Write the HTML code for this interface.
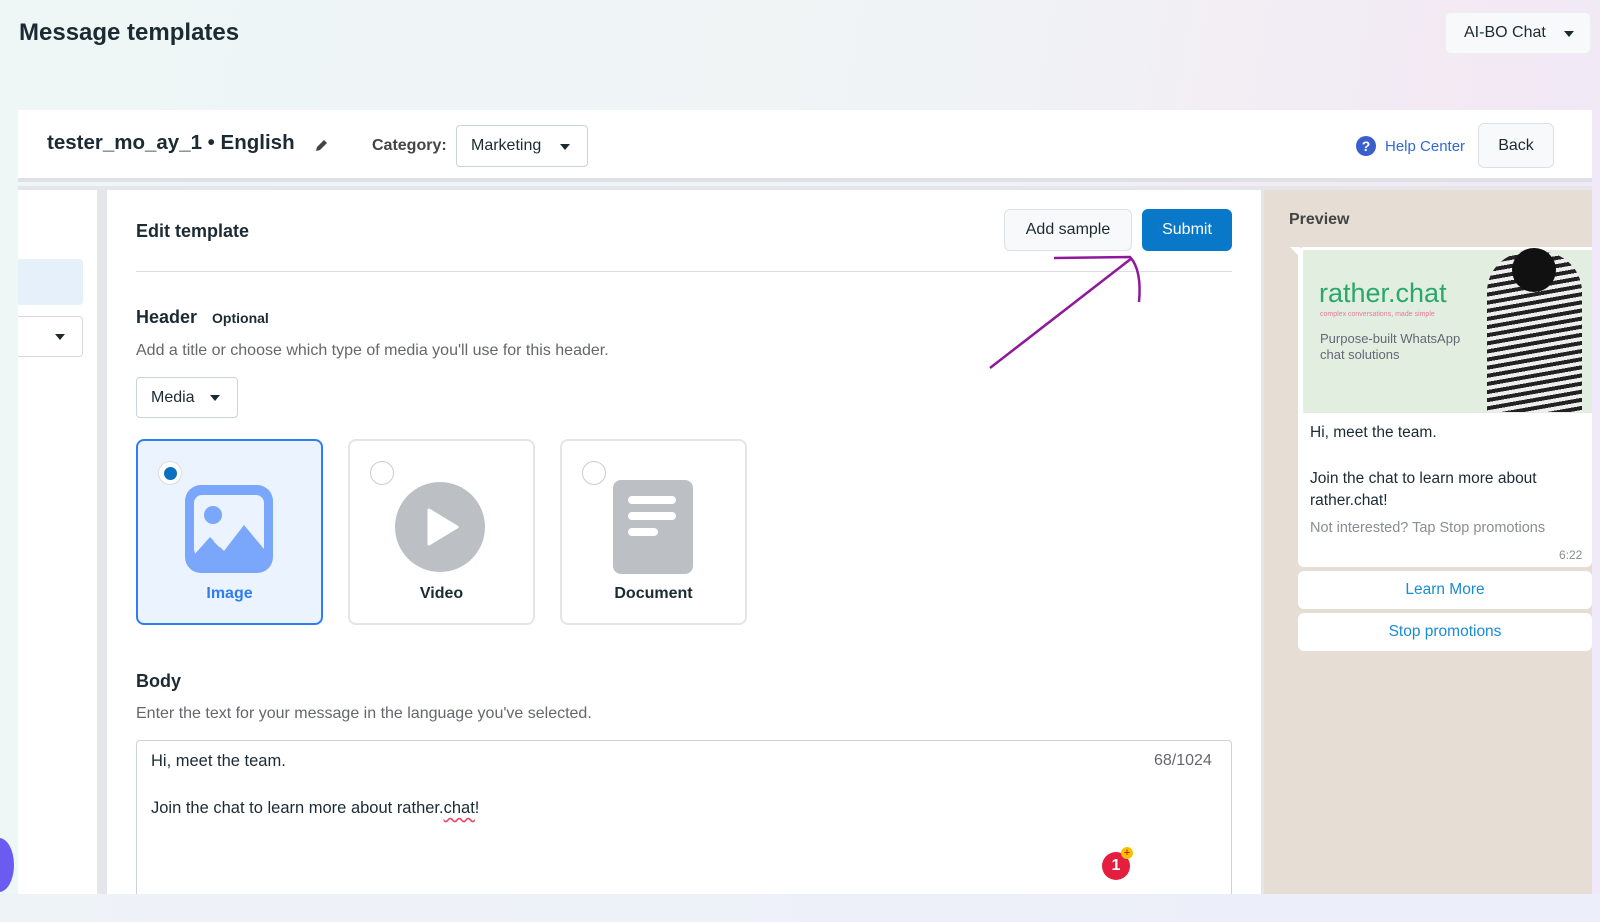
<!DOCTYPE html>
<html><head><meta charset="utf-8"><style>
*{box-sizing:border-box;margin:0;padding:0}
body{width:1600px;height:922px;overflow:hidden;font-family:"Liberation Sans",sans-serif;color:#1c2b33;background:linear-gradient(100deg,#eef6f6 0%,#f0f3f5 55%,#f3e9f4 85%,#efe9fa 100%);position:relative}
.a{position:absolute}
.btn{position:absolute;background:#f5f6f7;border:1px solid #dde1e4;border-radius:6px;font-size:16px;display:flex;align-items:center;justify-content:center;color:#1c2b33}
.dd{position:absolute;background:#fff;border:1px solid #cbd2d9;border-radius:4px;font-size:16px;display:flex;align-items:center;padding-left:14px}
.car{width:0;height:0;border-left:5px solid transparent;border-right:5px solid transparent;border-top:6px solid #1c2b33;position:absolute}
.card{position:absolute;top:439px;width:187px;height:186px;border:2px solid #e3e5e8;border-radius:8px;background:#fff}
.card .lbl{position:absolute;top:144px;width:100%;text-align:center;font-weight:bold;font-size:16px}
.rad{position:absolute;left:20px;top:20px;width:24px;height:24px;border-radius:50%;border:1px solid #c9ccd1;background:#fff}
</style></head><body>
<div class="a" style="left:19px;top:19px;font-size:24px;font-weight:bold;color:#1c2b33">Message templates</div>
<div class="btn" style="left:1445px;top:12px;width:146px;height:42px;background:#f8f9fa;border-color:#eceef0;justify-content:flex-start;padding-left:18px">AI-BO Chat<span class="car" style="left:118px;top:18px"></span></div>

<div class="a" style="left:18px;top:110px;width:1574px;height:72px;background:#fff;border-bottom:4px solid #dfe1e4"></div>
<div class="a" style="left:47px;top:131px;font-size:20.5px;font-weight:bold">tester_mo_ay_1 • English</div>
<svg class="a" style="left:314px;top:137px" width="16" height="16" viewBox="0 0 16 16"><path d="M2 14l1-4 7-7 3 3-7 7z" fill="#444"/></svg>
<div class="a" style="left:372px;top:137px;font-size:16px;font-weight:bold;color:#444">Category:</div>
<div class="dd" style="left:456px;top:125px;width:132px;height:42px">Marketing<span class="car" style="left:103px;top:18px"></span></div>
<svg class="a" style="left:1356px;top:136px" width="20" height="20"><circle cx="10" cy="10" r="10" fill="#3a5fcd"/><text x="10" y="15" font-size="14" font-weight="bold" fill="#fff" text-anchor="middle" font-family="Liberation Sans">?</text></svg>
<div class="a" style="left:1385px;top:138px;font-size:15px;color:#2d6ad8">Help Center</div>
<div class="btn" style="left:1478px;top:123px;width:76px;height:45px;background:#f8f9fa">Back</div>

<div class="a" style="left:18px;top:186px;width:1574px;height:708px;background:#e4e6e9"></div>
<div class="a" style="left:18px;top:190px;width:79px;height:704px;background:#fff"></div>
<div class="a" style="left:18px;top:259px;width:65px;height:46px;background:#e6f0fb;border-radius:0 4px 4px 0"></div>
<div class="a" style="left:18px;top:316px;width:65px;height:41px;background:#fff;border:1px solid #d6d9dd;border-left:none;border-radius:0 4px 4px 0"><span class="car" style="left:37px;top:17px"></span></div>
<div class="a" style="left:107px;top:190px;width:1154px;height:704px;background:#fff"></div>

<div class="a" style="left:136px;top:221px;font-size:18px;font-weight:bold">Edit template</div>
<div class="btn" style="left:1004px;top:209px;width:128px;height:42px;background:#f8f9fa">Add sample</div>
<div class="btn" style="left:1142px;top:209px;width:90px;height:42px;background:#0a78c8;border-color:#0a78c8;color:#fff">Submit</div>
<div class="a" style="left:136px;top:271px;width:1096px;height:1px;background:#dadde1"></div>

<div class="a" style="left:136px;top:307px;font-size:18px;font-weight:bold">Header <span style="font-size:14px;margin-left:10px">Optional</span></div>
<div class="a" style="left:136px;top:342px;font-size:16px;color:#65676b">Add a title or choose which type of media you'll use for this header.</div>
<div class="dd" style="left:136px;top:377px;width:102px;height:41px">Media<span class="car" style="left:73px;top:17px"></span></div>

<div class="card" style="left:136px;border-color:#2e7df6;background:#ebf3fe">
 <div class="rad" style="border-color:#ddd"><div style="position:absolute;left:5px;top:5px;width:13px;height:13px;border-radius:50%;background:#0a70c0"></div></div>
 <svg class="a" style="left:47px;top:44px" width="88" height="88" viewBox="0 0 88 88"><rect x="0" y="0" width="88" height="88" rx="16" fill="#7aa7fb"/><rect x="9" y="10" width="70" height="62" rx="8" fill="#ebf3fe"/><circle cx="28" cy="30" r="9" fill="#7aa7fb"/><path d="M9 70L25 52l14 14 20-26 20 24v16H9z" fill="#7aa7fb"/><path d="M30 55l6 6" stroke="#ebf3fe" stroke-width="4"/></svg>
 <div class="lbl" style="color:#2e7df6">Image</div>
</div>
<div class="card" style="left:348px"><div class="rad"></div>
 <svg class="a" style="left:45px;top:41px" width="90" height="90"><circle cx="45" cy="45" r="45" fill="#bcc0c4"/><path d="M34 28l28 17-28 17z" fill="#fff" stroke="#fff" stroke-width="3" stroke-linejoin="round"/></svg>
 <div class="lbl">Video</div></div>
<div class="card" style="left:560px"><div class="rad"></div>
 <svg class="a" style="left:51px;top:39px" width="80" height="94"><rect width="80" height="94" rx="8" fill="#bcc0c4"/><rect x="15" y="16" width="48" height="8" rx="4" fill="#fff"/><rect x="15" y="32" width="48" height="8" rx="4" fill="#fff"/><rect x="15" y="48" width="30" height="8" rx="4" fill="#fff"/></svg>
 <div class="lbl">Document</div></div>

<div class="a" style="left:136px;top:671px;font-size:18px;font-weight:bold">Body</div>
<div class="a" style="left:136px;top:705px;font-size:16px;color:#65676b">Enter the text for your message in the language you've selected.</div>
<div class="a" style="left:136px;top:740px;width:1096px;height:160px;border:1px solid #cbd2d9;border-radius:4px;background:#fff"></div>
<div class="a" style="left:151px;top:752px;font-size:16.5px">Hi, meet the team.</div>
<div class="a" style="left:1154px;top:752px;font-size:16px;color:#65676b">68/1024</div>
<div class="a" style="left:151px;top:799px;font-size:16.5px">Join the chat to learn more about rather.<span style="text-decoration:underline wavy #e46;text-underline-offset:4px">chat</span>!</div>
<div class="a" style="left:1102px;top:852px;width:28px;height:28px;border-radius:50%;background:#e41e3f;color:#fff;font-weight:bold;font-size:16px;text-align:center;line-height:28px">1</div>
<div class="a" style="left:1121px;top:847px;width:12px;height:12px;border-radius:50%;background:#f7c100;font-size:11px;line-height:12px;text-align:center;color:#c00">+</div>

<svg class="a" style="left:0;top:0" width="1600" height="922"><path d="M990 368L1132 258" stroke="#8d1a9a" stroke-width="2.5" fill="none"/><path d="M1054 258L1130 257Q1142 270 1139 302" stroke="#8d1a9a" stroke-width="2.5" fill="none"/></svg>

<div class="a" style="left:1264px;top:190px;width:328px;height:704px;background:#e6ded5"></div>
<div class="a" style="left:1289px;top:211px;font-size:16px;font-weight:bold;color:#444">Preview</div>
<div class="a" style="left:1298px;top:247px;width:294px;height:320px;background:#fff;border-radius:6px 0 6px 6px"></div>
<div class="a" style="left:1290px;top:247px;width:0;height:0;border-left:10px solid transparent;border-top:10px solid #fff"></div>
<div class="a" style="left:1303px;top:250px;width:289px;height:163px;background:#e2eee0"></div>
<div class="a" style="left:1319px;top:278px;font-size:27px;color:#2aa86a">rather.chat</div>
<div class="a" style="left:1320px;top:311px;font-size:7px;color:#e8799a">complex conversations, made simple</div>
<div class="a" style="left:1320px;top:331px;font-size:13px;color:#667;line-height:16px">Purpose-built WhatsApp<br>chat solutions</div>
<div class="a" style="left:1487px;top:252px;width:95px;height:160px;background:repeating-linear-gradient(170deg,#222 0 4px,#eee 4px 8px);border-radius:40px 40px 0 0"></div>
<div class="a" style="left:1512px;top:248px;width:44px;height:44px;border-radius:50%;background:#111"></div>
<div class="a" style="left:1310px;top:424px;font-size:15.5px">Hi, meet the team.</div>
<div class="a" style="left:1310px;top:468px;font-size:15.5px;line-height:22px">Join the chat to learn more about<br>rather.chat!</div>
<div class="a" style="left:1310px;top:520px;font-size:14.5px;color:#8a8d91">Not interested? Tap Stop promotions</div>
<div class="a" style="left:1559px;top:548px;font-size:12px;color:#8a8d91">6:22</div>
<div class="a" style="left:1298px;top:571px;width:294px;height:38px;background:#fff;border-radius:6px;color:#1a8bd6;font-size:15.5px;text-align:center;line-height:38px">Learn More</div>
<div class="a" style="left:1298px;top:613px;width:294px;height:38px;background:#fff;border-radius:6px;color:#1a8bd6;font-size:15.5px;text-align:center;line-height:38px">Stop promotions</div>

<div class="a" style="left:0;top:894px;width:1600px;height:28px;background:linear-gradient(90deg,#eef3f8,#eceef9)"></div>
<div class="a" style="left:-16px;top:838px;width:30px;height:54px;border-radius:50%;background:#6a5cf0"></div>
</body></html>
